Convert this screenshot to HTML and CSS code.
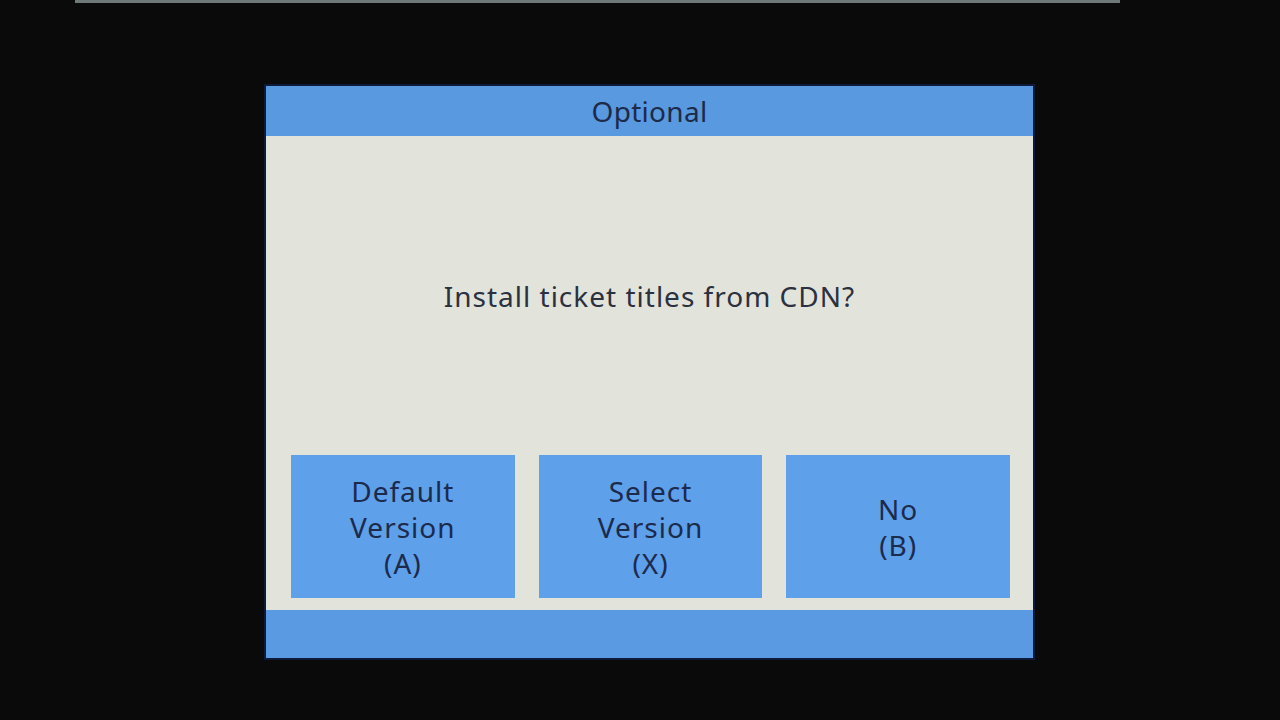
FILE: index.html
```html
<!DOCTYPE html>
<html>
<head>
<meta charset="utf-8">
<link rel="stylesheet" href="styles.css">
</head>
<body>
<div class="top-strip"></div>
<div class="bezel">
  <div class="screen">
    <div class="header">Optional</div>
    <div class="message">Install ticket titles from CDN?</div>
    <div class="buttons">
      <div class="btn">Default<br>Version<br>(A)</div>
      <div class="btn">Select<br>Version<br>(X)</div>
      <div class="btn">No<br>(B)</div>
    </div>
    <div class="footer"></div>
  </div>
</div>
</body>
</html>
```
FILE: styles.css
```css
html, body {
  margin: 0;
  padding: 0;
  width: 1280px;
  height: 720px;
  overflow: hidden;
  background: #0a0a0a;
  font-family: "Noto Sans", "Liberation Sans", sans-serif;
}
.top-strip {
  margin-left: 75px;
  width: 1045px;
  height: 3px;
  background: #6f7a78;
}
.bezel {
  padding-top: 83px;
  padding-left: 266px;
}
.screen {
  width: 767px;
  height: 572px;
  background: #e2e3da;
  display: flex;
  flex-direction: column;
  box-shadow: 0 0 0 2px #0d1a3a;
}
.header {
  height: 50px;
  background: #5899e0;
  color: #1d2a48;
  font-size: 28px;
  letter-spacing: 0.3px;
  display: flex;
  align-items: center;
  justify-content: center;
}
.message {
  flex: 1;
  display: flex;
  align-items: center;
  justify-content: center;
  color: #2b3140;
  font-size: 28px;
  letter-spacing: 1px;
}
.buttons {
  display: flex;
  gap: 24px;
  padding: 0 23px 12px 25px;
}
.btn {
  flex: 1;
  height: 143px;
  background: #5ea0e9;
  color: #1c2a4c;
  font-size: 28px;
  letter-spacing: 1px;
  line-height: 36px;
  display: flex;
  align-items: center;
  justify-content: center;
  text-align: center;
}
.footer {
  height: 48px;
  background: #5a9ae2;
}
```
